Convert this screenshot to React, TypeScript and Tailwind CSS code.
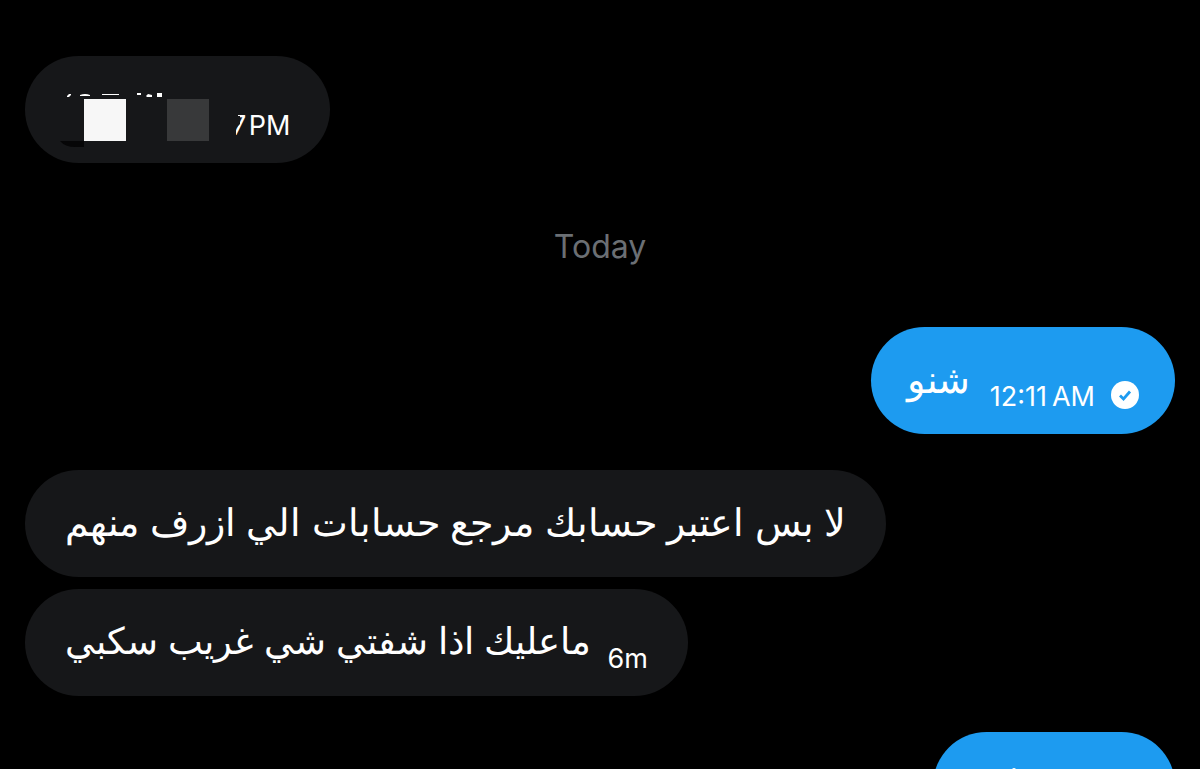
import type { ReactNode } from "react";

const timeText = "font-['Inter',sans-serif] text-[27px] leading-8 mt-8";

function Bubble({ own = false, children }: { own?: boolean; children: ReactNode }) {
  return (
    <div
      className={
        own
          ? "flex h-[107px] items-center self-end rounded-full bg-[#1d9bf0] px-9"
          : "flex h-[107px] items-center self-start rounded-full bg-[#161719] px-10"
      }
    >
      {children}
    </div>
  );
}

function Message({ compact = false, children }: { compact?: boolean; children: ReactNode }) {
  return (
    <p
      lang="ar"
      dir="rtl"
      className={`font-['Liberation_Sans',sans-serif] leading-12 pb-0.5 ${compact ? "text-[37px]" : "text-[38px]"}`}
    >
      {children}
    </p>
  );
}

function Redaction() {
  return (
    <svg className="z-10 h-[107px] w-[174px] overflow-visible" viewBox="0 0 174 107" aria-hidden="true">
      <path d="M2 40l2-2h2v1l-2 2H2zM15 39q5-2 10 0v1H15zM37 38h17v1H37zM72 37h4v2h-4zM81 40l2-2 4 1v2h-5zM92 37h5v4h-5z" fill="#fff" />
      <path d="M-5 85h24v6h-9Q0 91-5 85z" fill="#060607" />
      <rect x="19" y="43" width="42" height="42" fill="#f7f7f7" />
      <rect x="102" y="43" width="42" height="42" fill="#38393a" />
      <path d="M160 54h13v6h2v8l-4 4v12h-11z" fill="#161719" />
    </svg>
  );
}

function SentBadge() {
  return (
    <svg className="ml-4 mt-7 size-7" viewBox="0 0 28 28" role="img" aria-label="Sent">
      <circle cx="14" cy="14" r="14" fill="#fff" />
      <path d="M9 14.5l3.5 3.5 6.5-7.5" fill="none" stroke="#1d9bf0" strokeWidth="2.8" />
    </svg>
  );
}

export default function App() {
  return (
    <main className="flex h-screen flex-col overflow-hidden bg-black px-[25px] pt-14 text-white *:shrink-0">
      <Bubble>
        <Redaction />
        <time className={`${timeText} -ml-2`}>7{"\u200A"}PM</time>
      </Bubble>

      <h2 className="mt-[66px] mb-[62px] self-center font-['Inter',sans-serif] text-[32px] leading-9 text-[#6b6f74]">
        Today
      </h2>

      <Bubble own>
        <Message>شنو</Message>
        <time className={`${timeText} ml-5`}>12:11{"\u2009"}AM</time>
        <SentBadge />
      </Bubble>

      <div className="my-9 flex flex-col gap-3">
        <Bubble>
          <Message>لا بس اعتبر حسابك مرجع حسابات الي ازرف منهم</Message>
        </Bubble>
        <Bubble>
          <Message compact>ماعليك اذا شفتي شي غريب سكبي</Message>
          <time className={`${timeText} ml-4`}>6m</time>
        </Bubble>
      </div>

      <Bubble own>
        <svg className="h-[107px] w-[170px]" viewBox="0 0 170 107" aria-hidden="true">
          <circle cx="45" cy="38" r="2" fill="#fff" />
        </svg>
      </Bubble>
    </main>
  );
}
